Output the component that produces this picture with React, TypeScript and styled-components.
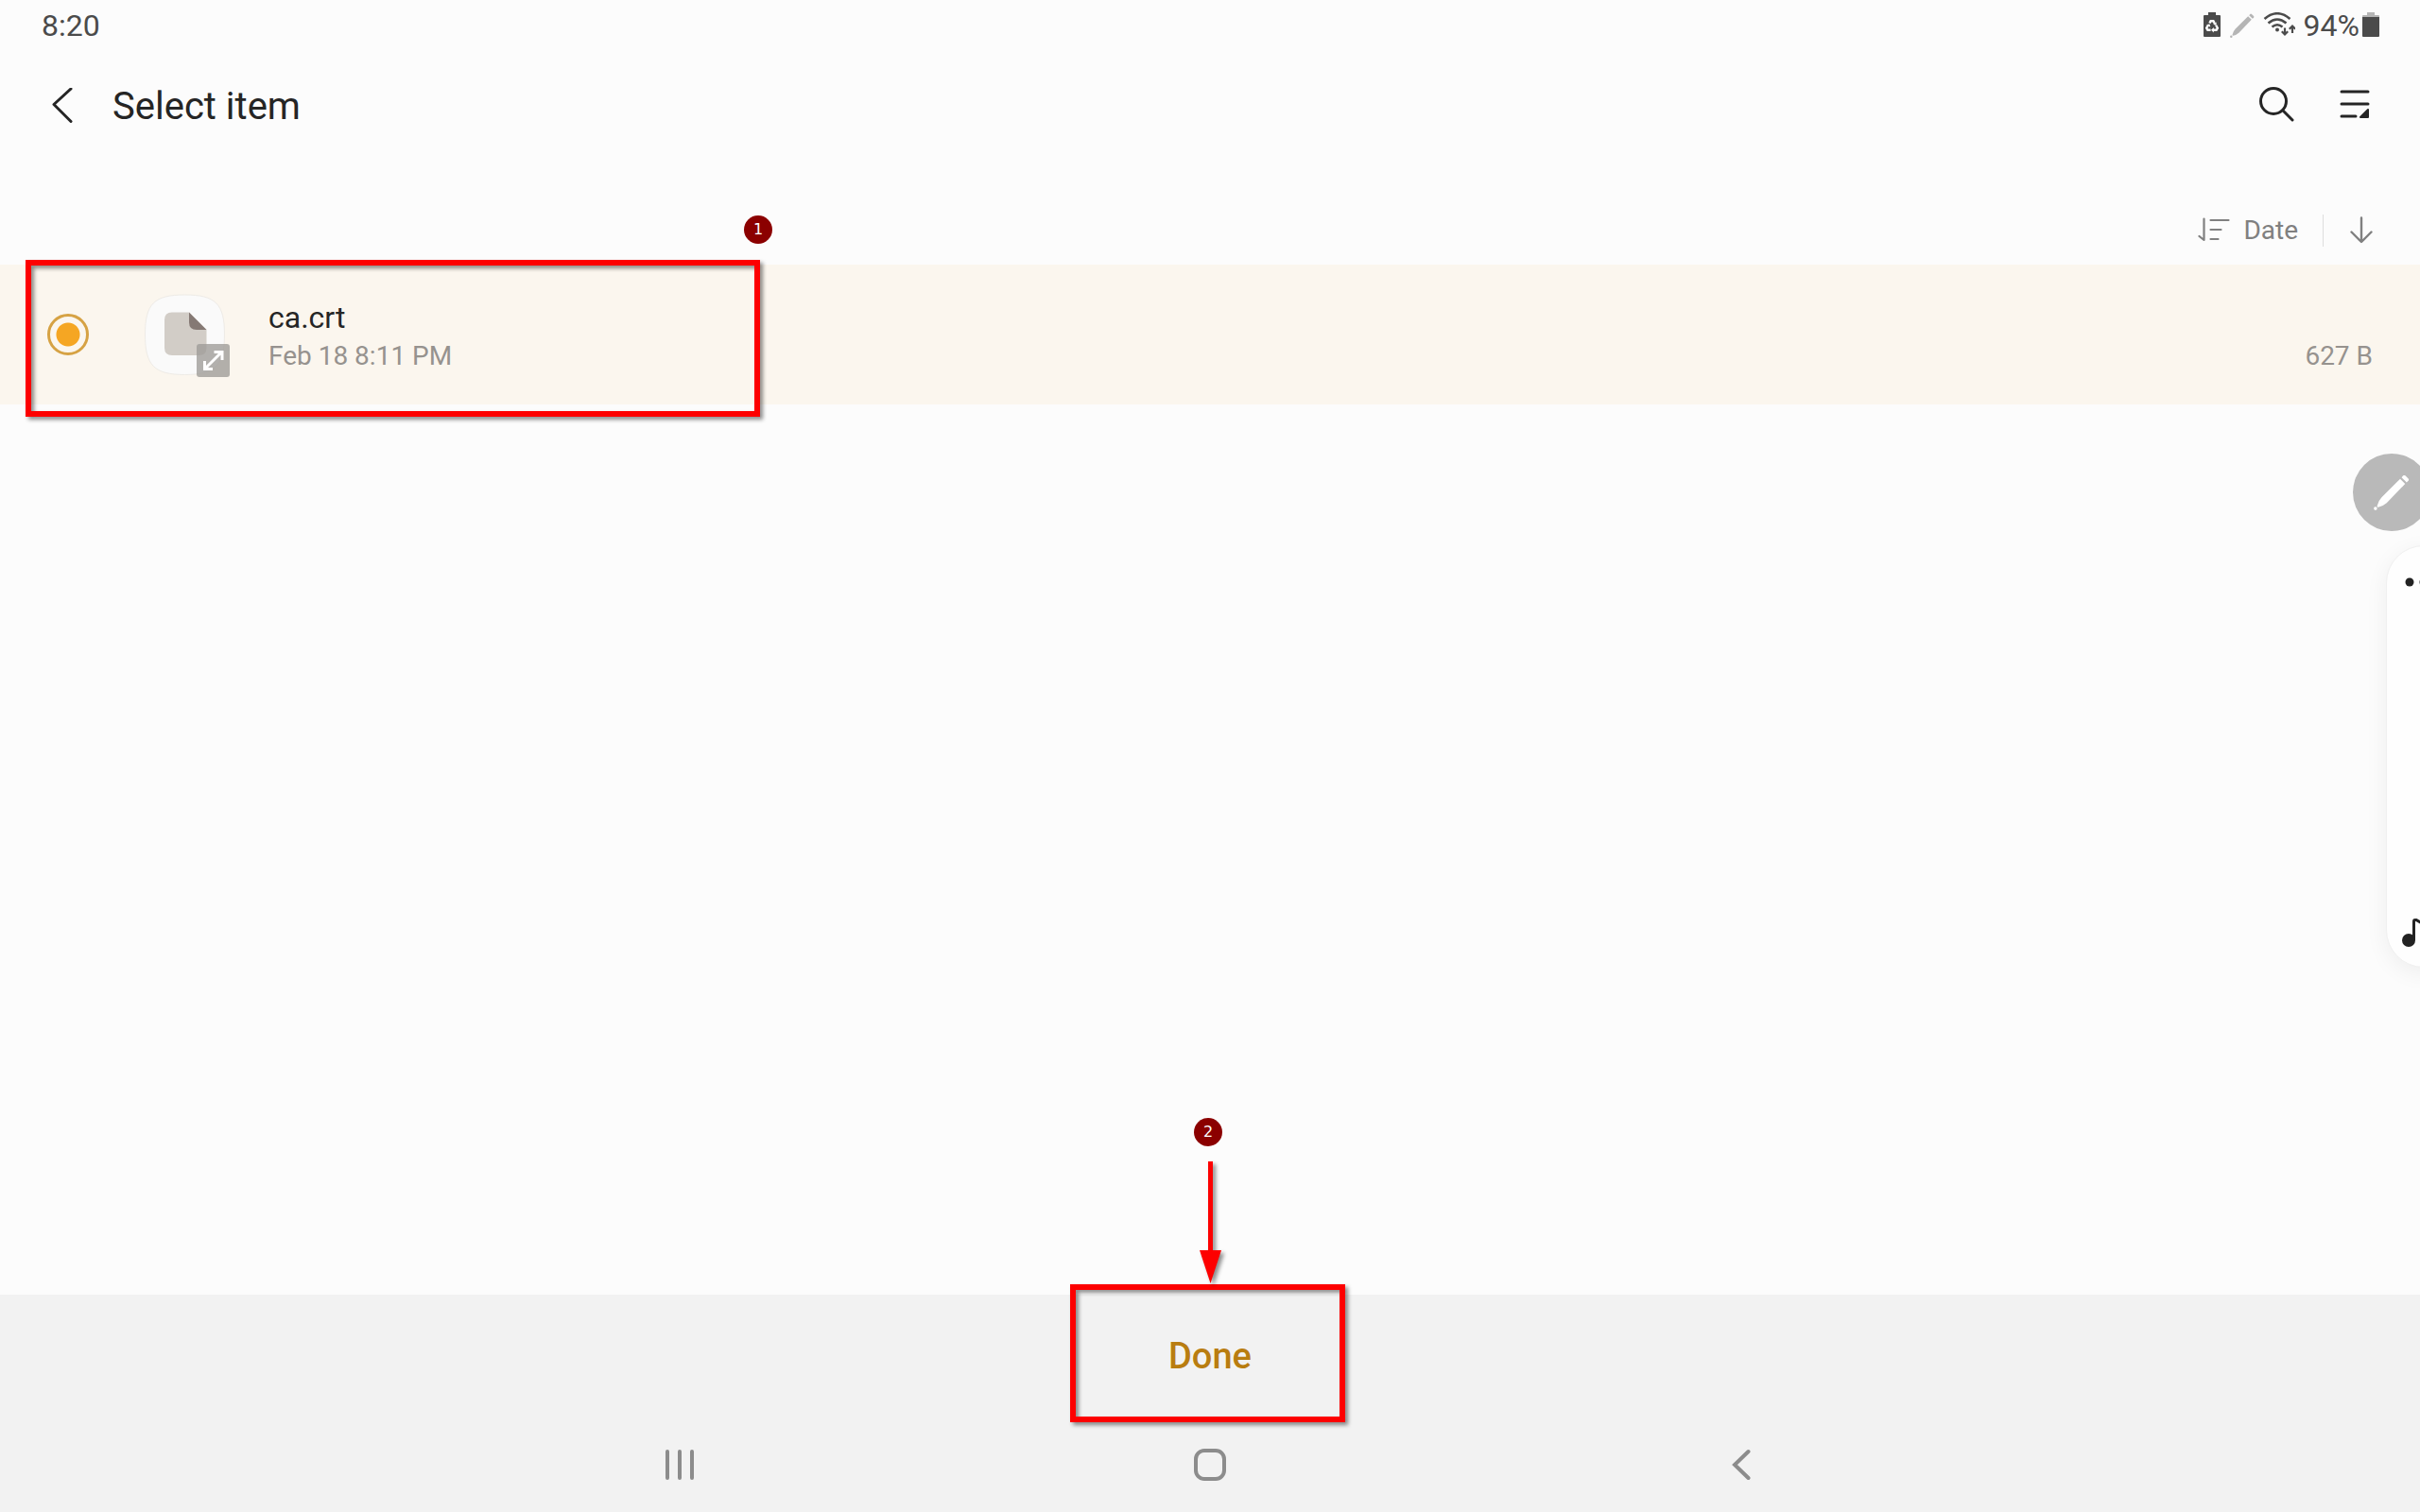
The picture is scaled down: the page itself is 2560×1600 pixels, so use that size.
import React from "react";
import styled, { createGlobalStyle } from "styled-components";

const GlobalStyle = createGlobalStyle`
  *, *::before, *::after { box-sizing: border-box; }
  body { margin: 0; background: #fcfcfc; }
  button, input { font: inherit; color: inherit; margin: 0; }
`;

const Screen = styled.div`
  position: relative;
  display: flex;
  flex-direction: column;
  min-height: 100vh;
  overflow: hidden;
  background: #fcfcfc;
  color: #252525;
  font-family: Roboto, "Liberation Sans", sans-serif;
`;

const StatusBar = styled.div`
  display: flex;
  align-items: center;
  justify-content: space-between;
  height: 54px;
  padding: 0 43px 0 44px;
  color: #4b4b4b;
  font-size: 32px;
  line-height: 40px;
`;

const StatusIcons = styled.div`
  display: flex;
  align-items: center;
  gap: 9px;
`;

const BatteryLevel = styled.span`
  display: flex;
  align-items: center;
  gap: 3px;
`;

const Icon = styled.svg`
  display: block;
  flex: none;
`;

const IconButton = styled.button`
  display: flex;
  align-items: center;
  justify-content: center;
  padding: 0;
  border: 0;
  background: none;
  color: inherit;
`;

const AppBar = styled.header`
  display: flex;
  align-items: center;
  height: 116px;
  padding: 2px 53px 0 52px;
`;

const Title = styled.h1`
  flex: 1;
  margin: 0 0 0 39px;
  font-size: 40px;
  font-weight: 400;
  line-height: 48px;
`;

const AppActions = styled.div`
  display: flex;
  align-items: center;
  gap: 48px;
  padding-bottom: 6px;
`;

const SortBar = styled.div`
  display: flex;
  align-items: center;
  justify-content: flex-end;
  height: 110px;
  padding: 38px 50px 0 0;
  color: #808080;
  font-size: 28px;
  line-height: 40px;
`;

const SortButton = styled(IconButton)`
  gap: 14px;
`;

const Divider = styled.span`
  width: 1px;
  height: 34px;
  margin: 0 28px 0 26px;
  background: #dedede;
`;

const Main = styled.main`
  flex: 1;
`;

const FileItem = styled.div`
  position: relative;
`;

const FileRow = styled.label`
  display: flex;
  align-items: center;
  height: 148px;
  padding: 0 50px;
  background: #fbf6ee;
`;

const Radio = styled.input`
  appearance: none;
  flex: none;
  width: 44px;
  height: 44px;
  border: 3px solid #d6a244;
  border-radius: 50%;
  background: radial-gradient(circle, #f5a623 0 12px, transparent 13px);
`;

const Thumb = styled.span`
  display: block;
  margin: 3px 40px 0 59px;
`;

const FileText = styled.span`
  display: flex;
  flex: 1;
  flex-direction: column;
  padding-top: 6px;
`;

const FileName = styled.span`
  font-size: 32px;
  line-height: 40px;
`;

const FileMeta = styled.span`
  display: flex;
  justify-content: space-between;
  color: #96928e;
  font-size: 28px;
  line-height: 42px;
`;

const Highlight = styled.div`
  position: absolute;
  border: 6px solid #fd0000;
  filter: drop-shadow(3px 3px 2px rgba(0, 0, 0, 0.45));
  pointer-events: none;
`;

const FileHighlight = styled(Highlight)`
  top: -5px;
  left: 27px;
  width: 777px;
  height: 166px;
`;

const DoneHighlight = styled(Highlight)`
  top: -11px;
  left: calc(50% - 148px);
  width: 291px;
  height: 146px;
`;

const StepBadge = styled.span`
  position: absolute;
  display: flex;
  align-items: center;
  justify-content: center;
  width: 30px;
  height: 30px;
  border-radius: 50%;
  background: #8b0000;
  color: #fff;
  font-family: "DejaVu Sans", sans-serif;
  font-size: 16px;
  line-height: 20px;
`;

const FileBadge = styled(StepBadge)`
  top: -52px;
  left: 787px;
`;

const DoneBadge = styled(StepBadge)`
  top: -187px;
  left: calc(50% - 17px);
`;

const Arrow = styled.svg`
  position: absolute;
  top: -141px;
  left: calc(50% - 11px);
  filter: drop-shadow(3px 3px 2px rgba(0, 0, 0, 0.45));
`;

const Footer = styled.footer`
  position: relative;
  background: #f2f2f2;
`;

const DoneRow = styled.div`
  display: flex;
  justify-content: center;
  height: 130px;
`;

const DoneButton = styled(IconButton)`
  width: 280px;
  color: #b97d10;
  font-size: 38px;
  font-weight: 500;
  line-height: 48px;
`;

const NavBar = styled.nav`
  display: grid;
  grid-template-columns: repeat(3, 1fr);
  height: 100px;
  padding: 0 17.1%;
  color: #8c8c8c;
`;

const PenBubble = styled.button`
  position: absolute;
  top: 480px;
  right: -11px;
  display: flex;
  align-items: center;
  justify-content: center;
  width: 82px;
  height: 82px;
  padding: 0;
  border: 0;
  border-radius: 50%;
  background: #b9b9b9;
`;

const EdgePanel = styled.aside`
  position: absolute;
  top: 577px;
  right: -44px;
  display: flex;
  flex-direction: column;
  justify-content: space-between;
  width: 80px;
  height: 447px;
  padding: 32px 0 20px 15px;
  border: 1px solid #f0f0f0;
  border-radius: 40px;
  background: #fefefe;
  box-shadow: 0 6px 24px rgba(0, 0, 0, 0.06);
`;

const SearchIcon = () => (
  <Icon width="38" height="38" viewBox="0 0 38 38" fill="none" stroke="currentColor" strokeWidth="3" strokeLinecap="round">
    <circle cx="16" cy="16" r="13.5" />
    <path d="M25.8 25.8 36 36" />
  </Icon>
);

const MenuIcon = () => (
  <Icon width="32" height="32" viewBox="0 0 32 32" fill="none" stroke="currentColor" strokeWidth="3" strokeLinecap="round">
    <path d="M2 3h28M2 16h28M2 29h15" />
    <path d="M30 22v8h-8z" fill="currentColor" strokeWidth="2" strokeLinejoin="round" />
  </Icon>
);

const PenIcon = ({ color, size }: { color: string; size: number }) => (
  <Icon width={size} height={size} viewBox="0 0 36 36" fill={color}>
    <path d="M26.5 4.5 31.5 9.5 13 28.6Q9 32 4.6 33Q3.2 32.8 3.5 31.5Q5 26 8 23z" />
    <path d="M28 3 29.5 1.3Q30.5.4 31.7 1.3L34.7 4.3Q35.6 5.5 34.7 6.5L33 8z" />
    <circle cx="1.8" cy="34.2" r="1.7" />
  </Icon>
);

export default function App() {
  return (
    <Screen>
      <GlobalStyle />
      <StatusBar>
        <time>8:20</time>
        <StatusIcons>
          <Icon width="20" height="28" viewBox="0 0 20 28">
            <path d="M6 0h8v3h4q1 0 1 1v21q0 1-1 1H2q-1 0-1-1V4q0-1 1-1h4z" fill="#4b4b4b" />
            <path d="M7.4 11.5 8.6 9.2h2.8l1.4 2.6M14.2 13.8l1.6 3-1.2 2H11M8.6 18.8H5.4l-1.2-2 1.6-3" fill="none" stroke="#fff" strokeWidth="2.4" />
            <path d="M14.6 10.5v3.6l-3.4-1.4zM11.8 16v5.4L9 18.7zM4.2 13l3.3-.6.8 3.4z" fill="#fff" />
          </Icon>
          <PenIcon color="#b5b5b5" size={26} />
          <Icon width="34" height="28" viewBox="0 0 34 28" fill="none" stroke="#4b4b4b" strokeWidth="2.6">
            <path d="M1.5 7Q15 -4.5 28.5 7M5.5 11.5Q15 3.5 24.5 11.5M9.5 15.5Q15 11 20.5 15.5" />
            <circle cx="15" cy="18.5" r="2" fill="#4b4b4b" stroke="none" />
            <path d="M23 16.5v7M19.8 20.3 23 23.5l3.2-3.2M31 22v-7M27.8 17.7 31 14.5l3.2 3.2" strokeWidth="2.2" />
          </Icon>
          <BatteryLevel>
            94%
            <Icon width="18" height="28" viewBox="0 0 18 28">
              <path d="M5 0h8v3h4q1 0 1 1v3H0V4q0-1 1-1h4z" fill="#b5b5b5" />
              <path d="M0 5h18v20q0 1-1 1H1q-1 0-1-1z" fill="#4b4b4b" />
            </Icon>
          </BatteryLevel>
        </StatusIcons>
      </StatusBar>

      <AppBar>
        <IconButton aria-label="Back">
          <Icon width="28" height="40" viewBox="0 0 28 40" fill="none" stroke="currentColor" strokeWidth="3" strokeLinecap="round" strokeLinejoin="round">
            <path d="M23 1.5 5 18l18 18" transform="translate(0 -0.5)" />
          </Icon>
        </IconButton>
        <Title>Select item</Title>
        <AppActions>
          <IconButton aria-label="Search"><SearchIcon /></IconButton>
          <IconButton aria-label="Menu"><MenuIcon /></IconButton>
        </AppActions>
      </AppBar>

      <SortBar>
        <SortButton>
          <Icon width="34" height="28" viewBox="0 0 34 28" fill="none" stroke="currentColor" strokeWidth="2.2" strokeLinecap="round" strokeLinejoin="round">
            <path d="M6.5 1.5v22.5L1.5 20M13.5 3h19M13.5 13h11M13.5 23h8" />
          </Icon>
          Date
        </SortButton>
        <Divider />
        <IconButton aria-label="Descending">
          <Icon width="24" height="30" viewBox="0 0 24 30" fill="none" stroke="currentColor" strokeWidth="2.4" strokeLinecap="round" strokeLinejoin="round">
            <path d="M12 1.5v25M1.5 16.5 12 27 22.5 16.5" />
          </Icon>
        </IconButton>
      </SortBar>

      <Main>
        <FileItem>
          <FileRow>
            <Radio type="radio" name="file" defaultChecked />
            <Thumb>
              <Icon width="91" height="90" viewBox="0 0 91 90">
                <path d="M42.5 1C75 1 84.5 10.5 84.5 43S75 85.5 42.5 85.5.5 75.5.5 43 10 1 42.5 1z" fill="#fafafa" stroke="#eeebe6" />
                <path d="M29 19.5h18L65.5 38v19q0 8-8 8H29q-8 0-8-8V27.5q0-8 8-8z" fill="#d2cdc7" />
                <path d="M47 19.5 65.5 38H55q-8 0-8-8z" fill="#857974" />
                <rect x="55" y="53" width="35" height="35" rx="3" fill="#9e9b97" fillOpacity=".78" />
                <path d="M65 78 80.5 62.5M73.5 61.5h8.5V70M63.5 71v8.5H72" fill="none" stroke="#fff" strokeWidth="3" />
              </Icon>
            </Thumb>
            <FileText>
              <FileName>ca.crt</FileName>
              <FileMeta>
                <span>Feb 18 8:11 PM</span>
                <span>627 B</span>
              </FileMeta>
            </FileText>
          </FileRow>
          <FileHighlight />
          <FileBadge>1</FileBadge>
        </FileItem>
      </Main>

      <Footer>
        <DoneRow>
          <DoneButton>Done</DoneButton>
        </DoneRow>
        <NavBar>
          <IconButton aria-label="Recent apps">
            <Icon width="32" height="34" viewBox="0 0 32 34" fill="none" stroke="currentColor" strokeWidth="4" strokeLinecap="round">
              <path d="M3 3v28M16 3v28M29 3v28" />
            </Icon>
          </IconButton>
          <IconButton aria-label="Home">
            <Icon width="34" height="34" viewBox="0 0 34 34" fill="none" stroke="currentColor" strokeWidth="4">
              <rect x="2" y="2" width="30" height="30" rx="9" />
            </Icon>
          </IconButton>
          <IconButton aria-label="Back">
            <Icon width="20" height="34" viewBox="0 0 20 34" fill="none" stroke="currentColor" strokeWidth="4" strokeLinecap="round">
              <path d="M17.5 3 3 17l14.5 14" />
            </Icon>
          </IconButton>
        </NavBar>
        <DoneHighlight />
        <DoneBadge>2</DoneBadge>
        <Arrow width="24" height="130" viewBox="0 0 24 130" fill="#fd0000">
          <path d="M9 0h5v94h9L11.5 129 0 94h9z" />
        </Arrow>
      </Footer>

      <PenBubble aria-label="Air command">
        <PenIcon color="#fff" size={38} />
      </PenBubble>
      <EdgePanel>
        <Icon width="60" height="12" viewBox="0 0 60 12" fill="#222">
          <circle cx="9" cy="6" r="4.5" />
          <circle cx="23" cy="6" r="3.5" />
        </Icon>
        <Icon width="34" height="34" viewBox="0 0 34 34" fill="#222">
          <circle cx="8" cy="26" r="7" />
          <path d="M13.5 26V6q0-2 2.5-1.5l12 7" fill="none" stroke="#222" strokeWidth="3" />
        </Icon>
      </EdgePanel>
    </Screen>
  );
}
